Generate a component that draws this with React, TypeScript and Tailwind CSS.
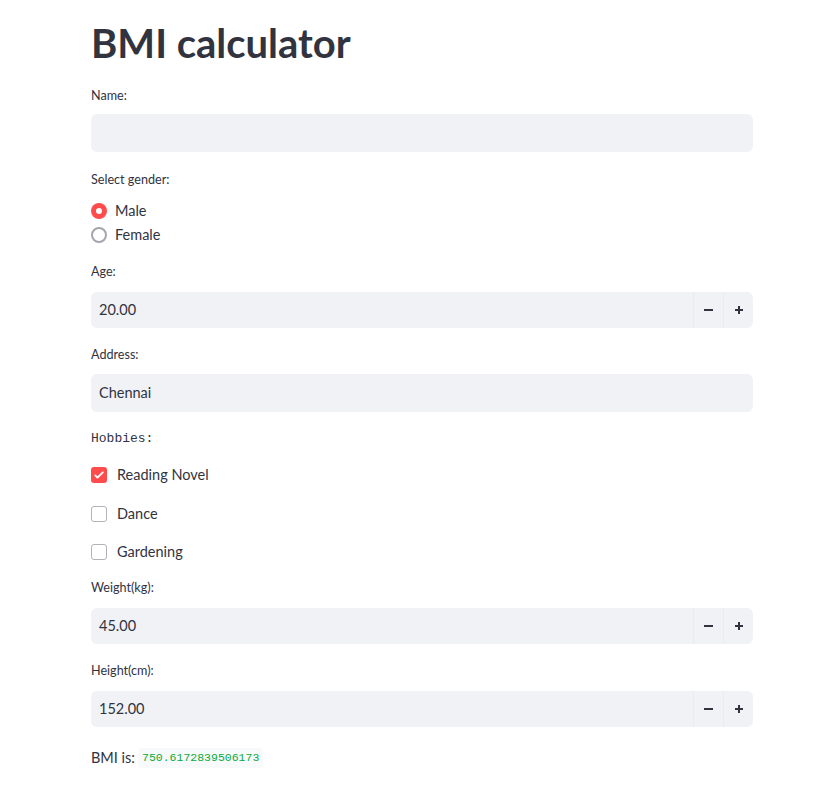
import React from 'react';

const Label = ({ children, mono = false }: { children: React.ReactNode; mono?: boolean }) => (
  <div
    className={`leading-5 text-[#31333f] ${mono ? "font-['Liberation_Mono',monospace] text-[13px]" : 'text-[12.6px]'}`}
  >
    {children}
  </div>
);

const NumberInput = ({ value }: { value: string }) => (
  <div className="flex h-9 w-full overflow-hidden rounded-md bg-[#f0f2f6]">
    <div className="flex flex-1 items-center px-2 text-[14.5px] text-[#31333f]">{value}</div>
    <div className="flex w-[30px] items-center justify-center border-l border-[#e9ebf0]">
      <span className="block h-[2px] w-[9px] bg-[#31333f]" />
    </div>
    <div className="relative flex w-[30px] items-center justify-center border-l border-[#e9ebf0]">
      <span className="block h-[2px] w-[8px] bg-[#31333f]" />
      <span className="absolute h-[8px] w-[2px] bg-[#31333f]" />
    </div>
  </div>
);

const Checkbox = ({ label, checked }: { label: string; checked?: boolean }) => (
  <div className="flex h-[22px] items-center gap-[10px] text-[14.5px] text-[#31333f]">
    {checked ? (
      <span className="flex h-4 w-4 items-center justify-center rounded-[3px] bg-[#ff4b4b]">
        <svg viewBox="0 0 16 16" className="h-3 w-3" fill="none" stroke="white" strokeWidth={2.5} strokeLinecap="round" strokeLinejoin="round">
          <path d="M3 8.5l3 3 7-7" />
        </svg>
      </span>
    ) : (
      <span className="h-4 w-4 rounded-[3px] border border-[#b0b3b9] bg-white" />
    )}
    <span>{label}</span>
  </div>
);

export default function App() {
  return (
    <div className="min-h-screen bg-white font-['Lato','Noto_Sans',sans-serif] text-[#31333f]">
      <div className="ml-[91px] w-[662px] pt-[18px]">
        <h1 className="text-[40px] font-bold leading-[50px] text-[#31333f]">BMI calculator</h1>

        <div className="mt-[18px]">
          <Label>Name:</Label>
          <div className="mt-[8px] h-[38px] w-full rounded-md bg-[#f0f2f6]" />
        </div>

        <div className="mt-[18px]">
          <Label>Select gender:</Label>
          <div className="mt-[9px] flex flex-col text-[14.5px]">
            <div className="flex h-6 items-center gap-[8px]">
              <span className="flex h-4 w-4 items-center justify-center rounded-full bg-[#ff4b4b]">
                <span className="h-[6px] w-[6px] rounded-full bg-white" />
              </span>
              <span>Male</span>
            </div>
            <div className="flex h-6 items-center gap-[8px]">
              <span className="h-4 w-4 rounded-full border-2 border-[#a3a6ad] bg-white" />
              <span>Female</span>
            </div>
          </div>
        </div>

        <div className="mt-[15px]">
          <Label>Age:</Label>
          <div className="mt-[10px]">
            <NumberInput value="20.00" />
          </div>
        </div>

        <div className="mt-[17px]">
          <Label>Address:</Label>
          <div className="mt-[9px] flex h-[38px] w-full items-center rounded-md bg-[#f0f2f6] px-2 text-[14.5px]">Chennai</div>
        </div>

        <div className="mt-[17px]">
          <Label mono>Hobbies:</Label>
          <div className="mt-[15px] flex flex-col gap-[16px]">
            <Checkbox label="Reading Novel" checked />
            <div className="mt-[1px]">
              <Checkbox label="Dance" />
            </div>
            <Checkbox label="Gardening" />
          </div>
        </div>

        <div className="mt-[15px]">
          <Label>Weight(kg):</Label>
          <div className="mt-[10px]">
            <NumberInput value="45.00" />
          </div>
        </div>

        <div className="mt-[17px]">
          <Label>Height(cm):</Label>
          <div className="mt-[10px]">
            <NumberInput value="152.00" />
          </div>
        </div>

        <div className="mt-[20px] flex items-center gap-[3px] text-[14.5px]">
          <span>BMI is:</span>
          <span className="rounded bg-[#f8f9fb] px-[4px] py-[1px] font-['Liberation_Mono',monospace] text-[11.5px] text-[#09ab3b]">
            750.6172839506173
          </span>
        </div>
      </div>
    </div>
  );
}
